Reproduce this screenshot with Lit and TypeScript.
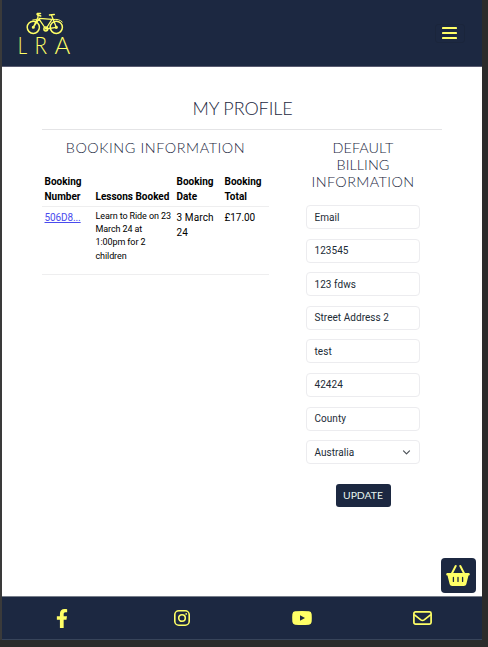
import { LitElement, html, css, svg } from "lit";
import { customElement } from "lit/decorators.js";

const fields = ["Email", "123545", "123 fdws", "Street Address 2", "test", "42424", "County"];

const bike = svg`
  <g fill="none" stroke="#ffff66" stroke-width="1.5" stroke-linecap="round" stroke-linejoin="round">
    <circle cx="7" cy="15.3" r="6.1"/>
    <circle cx="30" cy="15.3" r="6.1"/>
    <path d="M7 15.3 L13 6.4 L25.700 7.400 L19.500 17 L12.800 7.200 M7 15.300 L11.800 5 L11.600 2.800 M30 15.300 L25.300 3.600 M19.500 17 L30 15.300" stroke-width="1.3"/>
    <path d="M10.800 2.600 L11 1.400 L14.200 1.400 M11.600 3 L14.400 4 M23.200 3 L28 2.400" stroke-width="1.5"/>
    <path d="M6.500 8 L10 7.600 M27 7.500 Q33 6.600 36 10" stroke-width="1"/>
    <circle cx="19.500" cy="17" r="1.900"/>
    <circle cx="7" cy="15.300" r=".8"/><circle cx="30" cy="15.300" r=".9"/>
  </g>`;

@customElement("app-root")
export class AppRoot extends LitElement {
  static styles = css`
    :host { display: block; height: 647px; overflow: hidden; background: #2b2b2b;
      font: 10px/15px Roboto, sans-serif; color: #000; }
    * { box-sizing: border-box; }
    svg { display: block; }
    .page { position: relative; width: 482px; height: 640px; border-left: 2px solid #3a3a3a;
      background: #fff; display: flex; flex-direction: column; }
    header { height: 67px; background: #1c2841; border-bottom: 1px solid #595b70;
      display: flex; justify-content: space-between; align-items: flex-start; }
    .logo { margin: 12px 0 0 14px; }
    .logo text { font: 300 24px Lato, sans-serif; fill: #ffff66; }
    .toggle { margin: 24px 17.500px 0 0; width: 30px; height: 19px; border: 1px solid #1a253b; border-radius: 3px;
      display: flex; align-items: center; justify-content: center; }
    main { flex: 1; padding: 30px 40px 0 40px; }
    h1, h2 { margin: 0; font-family: Lato, sans-serif; font-weight: 300; text-align: center;
      color: #1c2841; text-transform: uppercase; white-space: nowrap; }
    h1 { font-size: 18px; line-height: 22px; letter-spacing: -.1px; height: 32px; padding-left: 1px; }
    .rule { height: 1px; background: #e4e4e6; }
    h2 { font-size: 14.4px; line-height: 17px; letter-spacing: .4px; }
    h2 .tight { letter-spacing: .05px; }
    .booking h2 { letter-spacing: .57px; }
    .columns { display: grid; grid-template-columns: 227px 114px; column-gap: 37px; padding-top: 9px; }
    table { width: 227px; table-layout: fixed; border-collapse: collapse; margin-top: 16px; }
    th, td { text-align: left; padding: 2.5px; vertical-align: top; border-bottom: 1px solid #eeeeef; }
    th { vertical-align: bottom; font-weight: 700; white-space: nowrap; height: 34px; padding: 0 2.5px 2px; }
    td { height: 68px; padding-top: 3px; letter-spacing: .12px; }
    .c1 { width: 51px; } .c2 { width: 81px; } .c3 { width: 48px; } .c4 { width: 47px; }
    .price { letter-spacing: -.05px; }
    .lesson { font-size: 9px; line-height: 13.4px; letter-spacing: -.1px; white-space: nowrap; padding-top: 3px; }
    a { color: #4a4bee; text-decoration: underline; letter-spacing: -.1px; }
    form { display: flex; flex-direction: column; align-items: center; }
    .fields { width: 114px; padding-top: 15px; display: grid; grid-auto-rows: 24px; row-gap: 9.6px; }
    .field { border: 1px solid #ececef; border-radius: 4px; padding: 0 8px 0 7.500px; line-height: 23px;
      letter-spacing: .05px; color: #212b36; display: flex; align-items: center; justify-content: space-between; }
    button { margin: 19.600px 0 0; width: 55px; height: 23px; padding: 0; border: 0; border-radius: 3px; background: #1c2841;
      color: #e7f5ef; font: 400 10.4px/23px Lato, sans-serif; letter-spacing: 0; }
    footer { height: 44px; background: #1c2841; border-top: 1px solid #777e8a; border-bottom: 1px solid #37445a;
      display: grid; grid-template-columns: repeat(4, 1fr); place-items: center; }
    .basket { position: absolute; right: 6px; top: 558px; width: 35px; height: 35px; border-radius: 4px;
      background: #1c2841; display: grid; place-items: center; padding-right: 1px; }
  `;

  render() {
    return html`
      <div class="page">
        <header>
          <svg class="logo" width="60" height="54" viewBox="0 0 60 54" aria-label="LRA">
            <g transform="translate(10.300 0)">${bike}</g>
            <text transform="translate(1.700 42) scale(.77 1)">L</text>
            <text transform="translate(18.400 42) scale(.86 1)">R</text>
            <text x="38.500" y="42">A</text>
          </svg>
          <div class="toggle">
            <svg width="15" height="13" viewBox="0 0 15 13" fill="#ffff66">
              <rect width="15" height="2" rx=".4"/><rect y="5" width="15" height="2" rx=".4"/><rect y="10" width="15" height="2" rx=".4"/>
            </svg>
          </div>
        </header>
        <main>
          <h1>My Profile</h1>
          <div class="rule"></div>
          <div class="columns">
            <section class="booking">
              <h2>Booking Information</h2>
              <table>
                <tr><th class="c1">Booking<br>Number</th><th class="c2">Lessons Booked</th><th class="c3">Booking<br>Date</th><th class="c4">Booking<br>Total</th></tr>
                <tr><td><a>506D8...</a></td><td class="lesson">Learn to Ride on 23<br>March 24 at<br>1:00pm for 2<br>children</td><td>3 March<br>24</td><td class="price">£17.00</td></tr>
              </table>
            </section>
            <form>
              <h2><span class="tight">Default<br>Billing</span><br>Information</h2>
              <div class="fields">
                ${fields.map((f) => html`<div class="field">${f}</div>`)}
                <div class="field">Australia
                  <svg width="9" height="7" viewBox="0 0 9 7" fill="none" stroke="#4b5157" stroke-width="1.2" stroke-linecap="round" stroke-linejoin="round"><path d="M1.5 1.8 L4.5 4.8 L7.5 1.8"/></svg>
                </div>
              </div>
              <button type="button">UPDATE</button>
            </form>
          </div>
        </main>
        <div class="basket">
          <svg width="24" height="21" viewBox="0 0 576 512" fill="#ffff66"><path d="M253.300 35.100c6.100-11.800 1.500-26.300-10.200-32.400s-26.300-1.500-32.400 10.200L117.600 192H32c-17.700 0-32 14.300-32 32s14.300 32 32 32L83.900 463.500C91 492 116.600 512 146 512H430c29.400 0 55-20 62.100-48.500L544 256c17.700 0 32-14.300 32-32s-14.300-32-32-32H458.400L365.300 12.900C359.200 1.200 344.700-3.400 332.900 2.700s-16.300 20.600-10.200 32.400L404.300 192H171.700L253.300 35.100zM192 304v96c0 8.800-7.200 16-16 16s-16-7.200-16-16V304c0-8.800 7.200-16 16-16s16 7.200 16 16zm96-16c8.800 0 16 7.200 16 16v96c0 8.800-7.200 16-16 16s-16-7.200-16-16V304c0-8.800 7.200-16 16-16zm128 16v96c0 8.800-7.200 16-16 16s-16-7.200-16-16V304c0-8.800 7.200-16 16-16s16 7.200 16 16z"/></svg>
        </div>
        <footer>
          <svg width="12" height="19" viewBox="0 0 320 512" preserveAspectRatio="none" fill="#ffff66"><path d="M279.140 288l14.220-92.660h-88.910v-60.130c0-25.350 12.420-50.060 52.240-50.060h40.420V6.260S260.430 0 225.360 0c-73.220 0-121.080 44.380-121.080 124.720v70.620H22.890V288h81.390v224h100.170V288z"/></svg>
          <svg width="16" height="16" viewBox="0 0 16 16" fill="none" stroke="#ffff66" stroke-width="1.6"><rect x=".8" y=".8" width="14.400" height="14.400" rx="4"/><circle cx="8" cy="8" r="3.300"/><circle cx="12.200" cy="3.900" r=".9" fill="#ffff66" stroke="none"/></svg>
          <svg width="20" height="14" viewBox="0 0 20 14"><path fill="#ffff66" d="M3 .3Q10-.3 17 .3Q19.300.6 19.600 3Q20 7 19.600 11Q19.300 13.400 17 13.700Q10 14.300 3 13.700Q.7 13.400.4 11Q0 7 .4 3Q.7.6 3 .3Z"/><path fill="#1c2841" d="M8 4.200 L13 7 L8 9.800Z"/></svg>
          <svg width="19" height="14" viewBox="0 0 19 14" fill="none" stroke="#ffff66" stroke-width="1.700" stroke-linejoin="round"><rect x=".9" y=".9" width="17.200" height="12.200" rx="1.600"/><path d="M1.200 3.700 L7.800 8.900 Q9.500 10.100 11.200 8.900 L17.800 3.700"/></svg>
        </footer>
      </div>`;
  }
}
